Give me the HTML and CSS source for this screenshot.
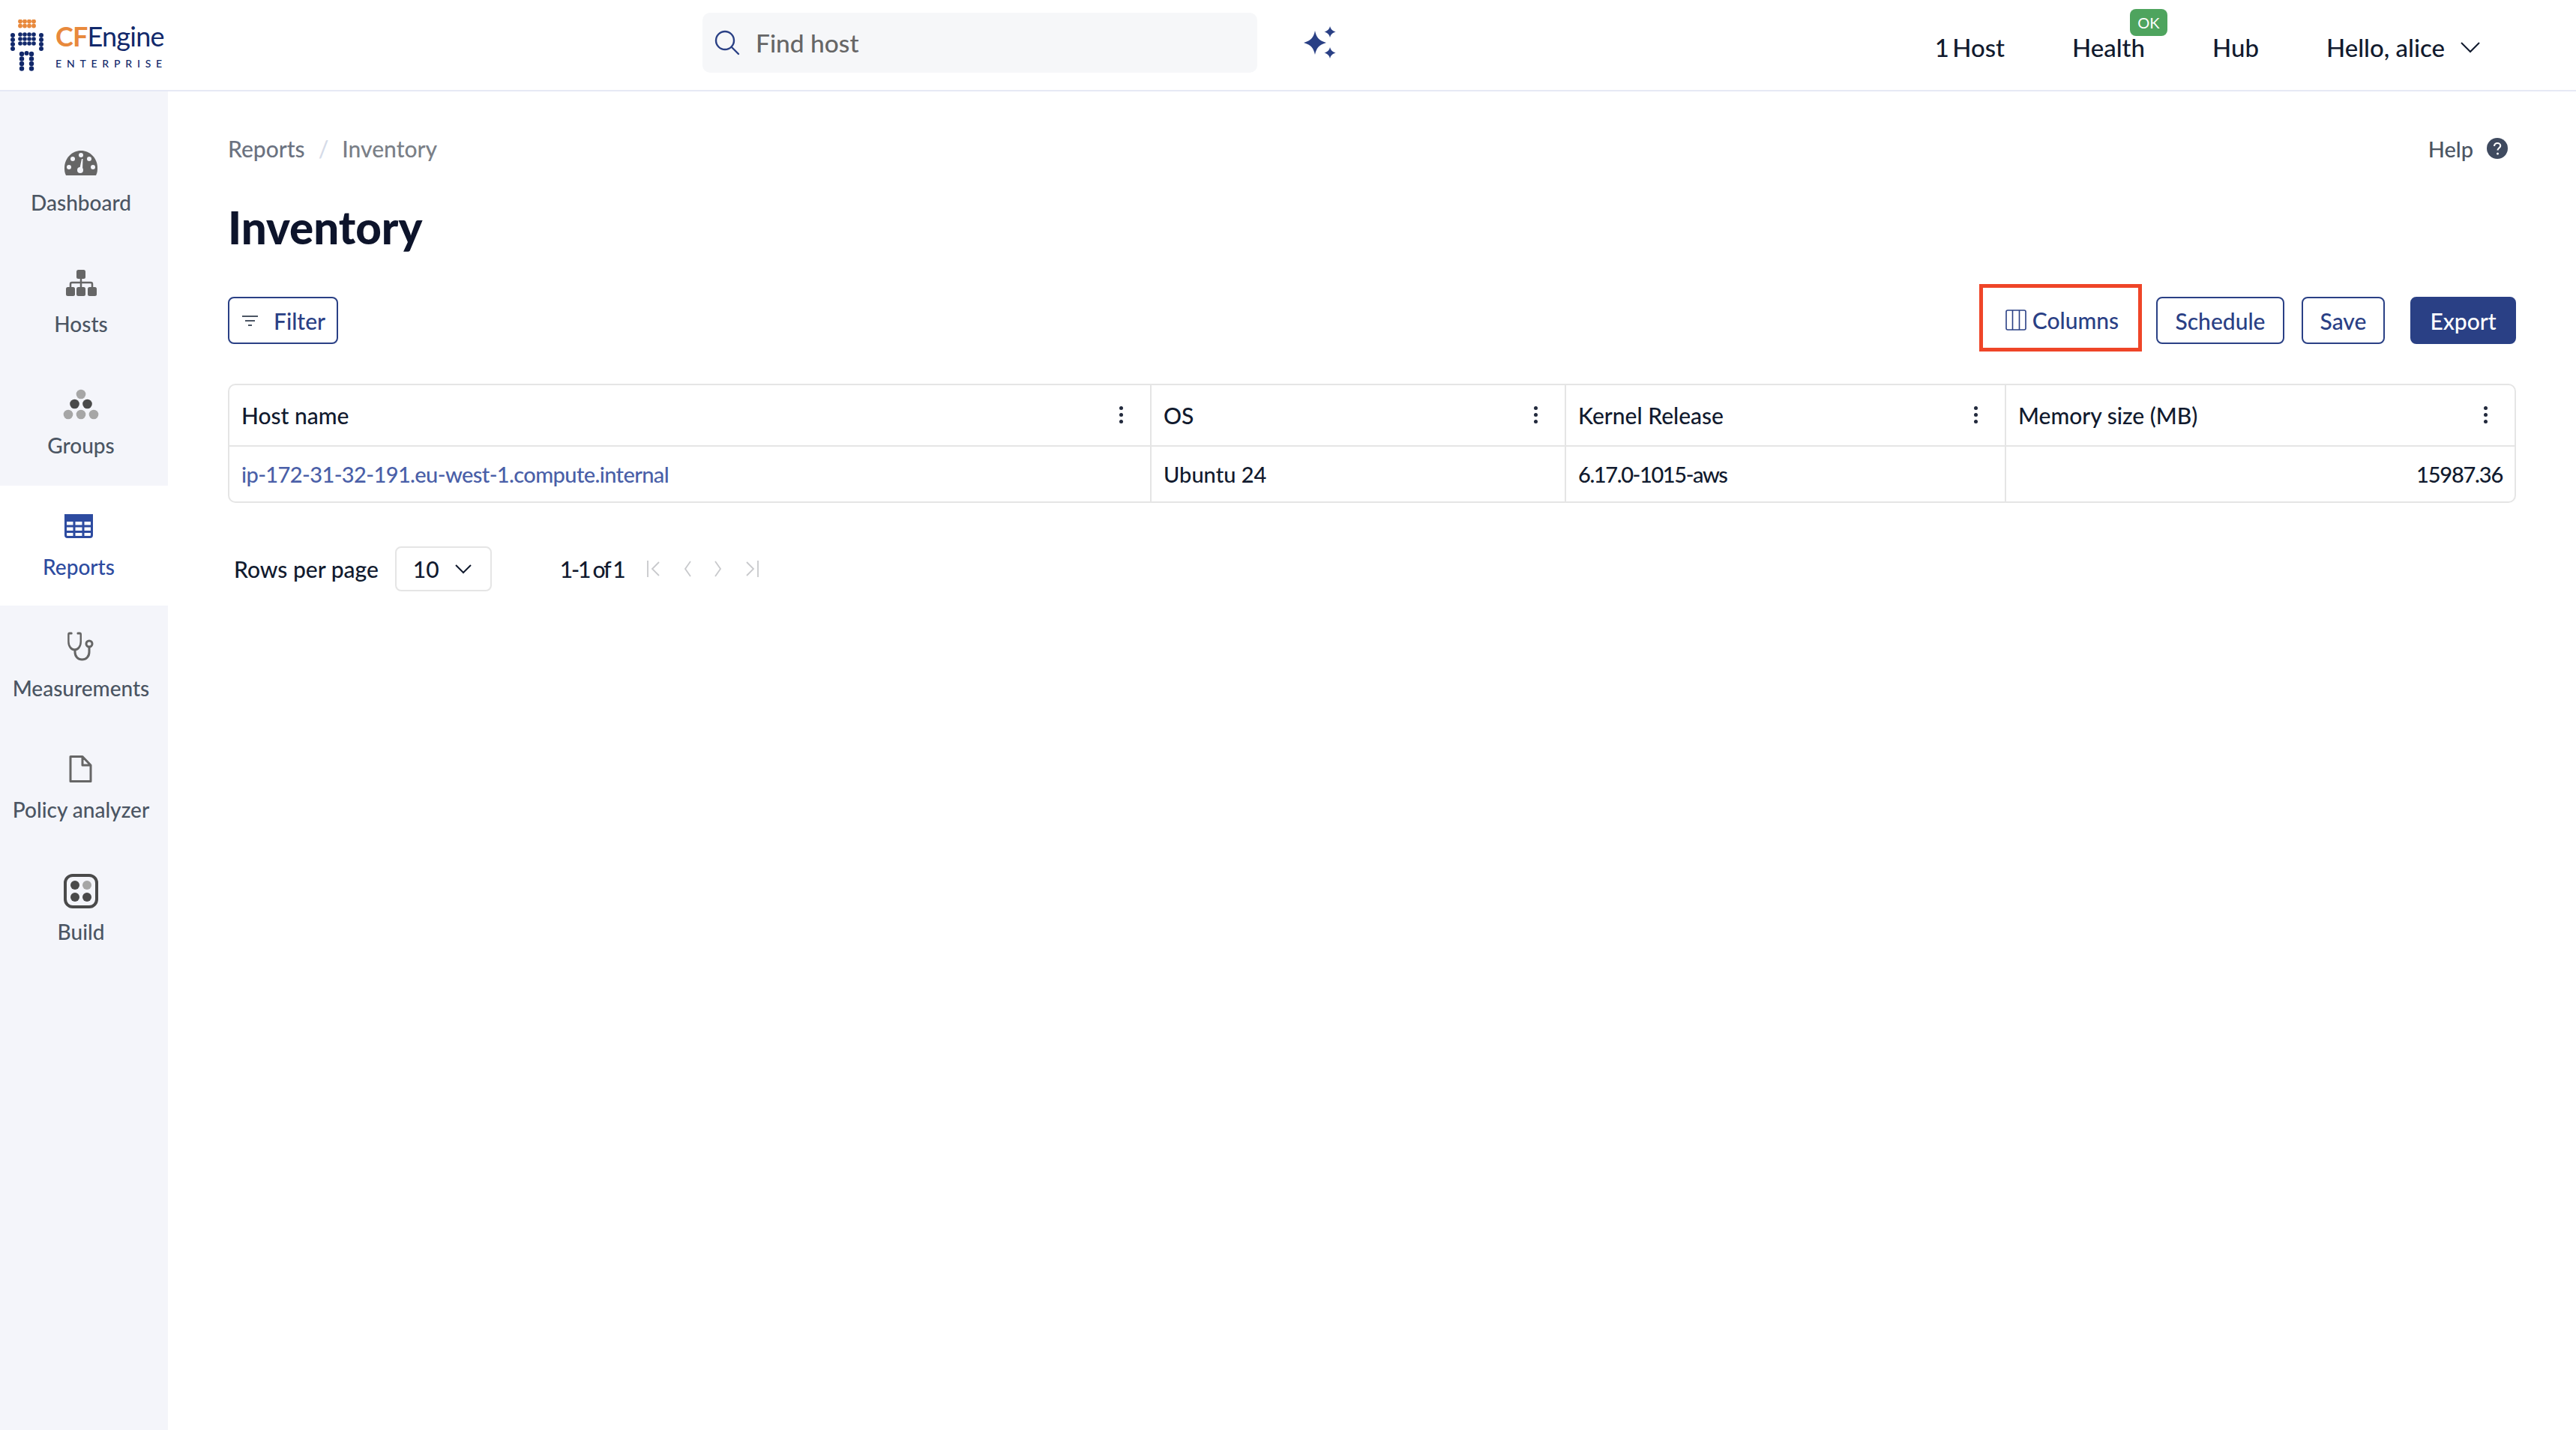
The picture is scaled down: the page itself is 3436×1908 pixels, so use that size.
FILE: index.html
```html
<!DOCTYPE html>
<html lang="en">
<head>
  <meta charset="UTF-8">
  <title>Inventory</title>
  <link rel="stylesheet" href="styles.css">
</head>
<body>
  <header class="topbar">
    <div class="logo">
      <svg class="logo-mark" width="44" height="72" viewBox="0 0 44 72">
        <g fill="#e8893c">
          <circle cx="13" cy="2.500" r="2.900"/><circle cx="19" cy="2.500" r="2.900"/><circle cx="25" cy="2.500" r="2.900"/><circle cx="31" cy="2.500" r="2.900"/>
          <circle cx="13" cy="8.500" r="2.900"/><circle cx="19" cy="8.500" r="2.900"/><circle cx="25" cy="8.500" r="2.900"/><circle cx="31" cy="8.500" r="2.900"/>
        </g>
        <g fill="#12296b">
          <circle cx="3" cy="21" r="3"/><circle cx="3" cy="27" r="3"/><circle cx="3" cy="33" r="3"/><circle cx="3" cy="39" r="3"/>
          <circle cx="41" cy="21" r="3"/><circle cx="41" cy="27" r="3"/><circle cx="41" cy="33" r="3"/><circle cx="41" cy="39" r="3"/>
          <circle cx="13" cy="20" r="2.800"/><circle cx="19" cy="20" r="2.800"/><circle cx="25" cy="20" r="2.800"/><circle cx="31" cy="20" r="2.800"/>
          <circle cx="13" cy="26" r="2.800"/><circle cx="19" cy="26" r="2.800"/><circle cx="25" cy="26" r="2.800"/><circle cx="31" cy="26" r="2.800"/>
          <circle cx="13" cy="32" r="2.800"/><circle cx="19" cy="32" r="2.800"/><circle cx="25" cy="32" r="2.800"/><circle cx="31" cy="32" r="2.800"/>
          <circle cx="15" cy="46" r="3.200"/><circle cx="15" cy="52.500" r="3.200"/><circle cx="15" cy="59" r="3.200"/><circle cx="15" cy="65.500" r="3.200"/>
          <circle cx="28" cy="46" r="3.200"/><circle cx="28" cy="52.500" r="3.200"/><circle cx="28" cy="59" r="3.200"/><circle cx="28" cy="65.500" r="3.200"/>
          <circle cx="21.500" cy="45" r="3"/>
        </g>
      </svg>
      <div class="logo-text">
        <div class="logo-name"><span class="logo-cf">CF</span>Engine</div>
        <div class="logo-sub">ENTERPRISE</div>
      </div>
    </div>

    <div class="search">
      <svg width="36" height="36" viewBox="0 0 36 36" fill="none" stroke="#2a4085" stroke-width="2.400" stroke-linecap="round">
        <circle cx="15" cy="15" r="12"/>
        <path d="M24 24l9 9"/>
      </svg>
      <span>Find host</span>
    </div>

    <svg class="sparkle" width="46" height="44" viewBox="0 0 46 44" fill="#2a4085">
      <path d="M15 6c2 9 5 13 15 16-10 3-13 7-15 16-2-9-5-13-15-16 10-3 13-7 15-16z"/>
      <path d="M35 0c1 4 3 6 7.500 7.500-4.500 1.500-6.500 3.500-7.500 7.500-1-4-3-6-7.500-7.500 4.500-1.500 6.500-3.500 7.500-7.500z"/>
      <path d="M35 28c1 4 3 6 7.500 7.500-4.500 1.500-6.500 3.500-7.500 7.500-1-4-3-6-7.500-7.500 4.500-1.500 6.500-3.500 7.500-7.500z"/>
    </svg>

    <nav class="topnav">
      <span class="hosts-count">1 Host</span>
      <span class="health">Health<span class="badge">OK</span></span>
      <span>Hub</span>
      <span class="user">Hello, alice
        <svg width="28" height="16" viewBox="0 0 28 16" fill="none" stroke="#111a2e" stroke-width="2"><path d="M2 2l12 12L26 2"/></svg>
      </span>
    </nav>
  </header>

  <div class="layout">
    <aside class="sidebar">
      <a class="side-item">
        <svg width="48" height="48" viewBox="0 0 48 48">
          <path d="M4 42c-2-4-2-7-2-10C2 19 12 9 24 9s22 10 22 23c0 3 0 6-2 10z" fill="#666"/>
          <g fill="#f4f5fa">
            <circle cx="24" cy="15" r="3"/><circle cx="13" cy="20" r="3"/><circle cx="35" cy="20" r="3"/>
            <circle cx="8" cy="31" r="3"/><circle cx="40" cy="31" r="3"/><circle cx="23" cy="35" r="4"/>
            <path d="M22 34l3-14h1.500l-.5 15z"/>
          </g>
        </svg>
        <span>Dashboard</span>
      </a>
      <a class="side-item">
        <svg width="48" height="48" viewBox="0 0 48 48">
          <g fill="#666">
            <rect x="18" y="6" width="12" height="12" rx="2.500"/>
            <rect x="4" y="29" width="12" height="12" rx="2.500"/>
            <rect x="18" y="29" width="12" height="12" rx="2.500"/>
            <rect x="33" y="29" width="12" height="12" rx="2.500"/>
          </g>
          <path d="M24 18v11M10 29v-4a2 2 0 0 1 2-2h25a2 2 0 0 1 2 2v4" fill="none" stroke="#666" stroke-width="2.500"/>
        </svg>
        <span>Hosts</span>
      </a>
      <a class="side-item">
        <svg width="48" height="48" viewBox="0 0 48 48">
          <g fill="#a6a6a6"><circle cx="24" cy="10" r="6.300"/><circle cx="7" cy="37" r="6.300"/><circle cx="24" cy="37" r="6.300"/><circle cx="41" cy="37" r="6.300"/></g>
          <g fill="#4a4a4a"><circle cx="15.500" cy="23" r="6.300"/><circle cx="32.500" cy="23" r="6.300"/></g>
        </svg>
        <span>Groups</span>
      </a>
      <a class="side-item active">
        <svg width="48" height="48" viewBox="0 0 48 48" fill="none" stroke="#2d4ba0" stroke-width="3">
          <rect x="6.500" y="9.500" width="35" height="29" rx="2.500"/>
          <path d="M6.500 16.500h35M6.500 24h35M6.500 31.500h35M18 16.500v22M30 16.500v22"/>
          <rect x="6.500" y="9.500" width="35" height="7" fill="#2d4ba0"/>
        </svg>
        <span>Reports</span>
      </a>
      <a class="side-item">
        <svg width="48" height="48" viewBox="0 0 48 48" fill="none" stroke="#666" stroke-width="3" stroke-linecap="round">
          <path d="M14 5h-3.500C9.500 5 9 5.500 9 6.500V16c0 7 5 11 10 11s10-4 10-11V6.500C29 5.500 28.500 5 27.500 5H24" transform="scale(.82 1)"/>
          <path d="M16 27v3c0 6 4 10 9.500 10S35 36 35 30v-6"/>
          <circle cx="35" cy="19" r="4"/>
        </svg>
        <span>Measurements</span>
      </a>
      <a class="side-item">
        <svg width="48" height="48" viewBox="0 0 48 48" fill="none" stroke="#666" stroke-width="3" stroke-linejoin="round">
          <path d="M10 7.500h16L37 19v21.500H10zM26 7.500V19h11"/>
        </svg>
        <span>Policy analyzer</span>
      </a>
      <a class="side-item">
        <svg width="48" height="48" viewBox="0 0 48 48">
          <rect x="3" y="3" width="42" height="42" rx="10" fill="none" stroke="#4a4a4a" stroke-width="4"/>
          <circle cx="16" cy="16" r="6" fill="#4a4a4a"/><circle cx="32" cy="16" r="6" fill="#a6a6a6"/>
          <circle cx="16" cy="32" r="6" fill="#4a4a4a"/><circle cx="32" cy="32" r="6" fill="#4a4a4a"/>
        </svg>
        <span>Build</span>
      </a>
    </aside>

    <main class="content">
      <div class="crumb-row">
        <div class="crumbs">
          <span>Reports</span><span class="slash">/</span><span class="current">Inventory</span>
        </div>
        <div class="help">Help
          <svg width="28" height="28" viewBox="0 0 28 28">
            <circle cx="14" cy="14" r="14" fill="#3f4a5f"/>
            <path d="M10 11c0-2.500 2-4 4.200-4 2.300 0 4 1.500 4 3.500 0 3-3.700 3-3.700 6" fill="none" stroke="#fff" stroke-width="2.200"/>
            <circle cx="14.500" cy="21" r="1.500" fill="#fff"/>
          </svg>
        </div>
      </div>

      <h1>Inventory</h1>

      <div class="toolbar">
        <button class="btn filter">
          <svg width="22" height="16" viewBox="0 0 22 16" fill="none" stroke="#4b5563" stroke-width="2"><path d="M0 2h21M4 8h13M8 14h5"/></svg>
          Filter
        </button>
        <div class="actions">
          <button class="btn columns">
            <svg width="28" height="28" viewBox="0 0 28 28" fill="none" stroke="#2a4085" stroke-width="1.600"><rect x="1" y="1" width="26" height="26" rx="2"/><path d="M9.500 1v26M18.500 1v26"/></svg>
            Columns
          </button>
          <button class="btn schedule">Schedule</button>
          <button class="btn save">Save</button>
          <button class="btn export">Export</button>
        </div>
      </div>

      <div class="table-wrap">
        <table>
          <colgroup>
            <col class="col-host"><col class="col-os"><col class="col-kernel"><col>
          </colgroup>
          <thead>
            <tr>
              <th><div class="th-inner">Host name<span class="kebab"><i></i><i></i><i></i></span></div></th>
              <th><div class="th-inner">OS<span class="kebab"><i></i><i></i><i></i></span></div></th>
              <th><div class="th-inner">Kernel Release<span class="kebab"><i></i><i></i><i></i></span></div></th>
              <th><div class="th-inner">Memory size (MB)<span class="kebab"><i></i><i></i><i></i></span></div></th>
            </tr>
          </thead>
          <tbody>
            <tr>
              <td><a class="host-link">ip-172-31-32-191.eu-west-1.compute.internal</a></td>
              <td>Ubuntu 24</td>
              <td class="kernel">6.17.0-1015-aws</td>
              <td class="num">15987.36</td>
            </tr>
          </tbody>
        </table>
      </div>

      <div class="pager">
        <span class="pager-label">Rows per page</span>
        <div class="select">10
          <svg width="24" height="14" viewBox="0 0 24 14" fill="none" stroke="#111a2e" stroke-width="2"><path d="M2 2l10 10L22 2"/></svg>
        </div>
        <span class="pager-count">1-1 of 1</span>
        <div class="pager-nav">
          <svg width="18" height="24" viewBox="0 0 18 24"><path d="M1 1v22M16 3L7 12l9 9"/></svg>
          <svg width="10" height="24" viewBox="0 0 10 24"><path d="M9 2L2 12l7 10"/></svg>
          <svg width="10" height="24" viewBox="0 0 10 24"><path d="M1 2l7 10-7 10"/></svg>
          <svg width="18" height="24" viewBox="0 0 18 24"><path d="M17 1v22M2 3l9 9-9 9"/></svg>
        </div>
      </div>
    </main>
  </div>
</body>
</html>
```

FILE: styles.css
```css
* {
  margin: 0;
  padding: 0;
  box-sizing: border-box;
}

body {
  font-family: "Lato", "Liberation Sans", sans-serif;
  font-weight: 500;
  color: #111a2e;
  background: #fff;
  height: 1908px;
  overflow: hidden;
  display: flex;
  flex-direction: column;
}

/* top bar */
.topbar {
  height: 122px;
  flex-shrink: 0;
  display: flex;
  align-items: center;
  border-bottom: 2px solid #e6e9f5;
}

.logo {
  width: 937px;
  padding-left: 14px;
  display: flex;
  align-items: center;
  gap: 16px;
}

.logo-mark {
  margin-top: 4px;
}

.logo-text {
  margin-top: 2px;
}

.logo-name {
  font-size: 36px;
  line-height: 40px;
  font-weight: 400;
  color: #12296b;
  letter-spacing: -0.800px;
}

.logo-cf {
  color: #e8893c;
  font-weight: 700;
}

.logo-sub {
  font-size: 14px;
  line-height: 18px;
  color: #12296b;
  letter-spacing: 6.800px;
  margin-top: 8px;
}

.search {
  width: 740px;
  height: 80px;
  margin-bottom: 6px;
  background: #f6f7f9;
  border-radius: 10px;
  padding-left: 15px;
  display: flex;
  align-items: center;
  gap: 20px;
  font-size: 33.500px;
  color: #666;
}

.sparkle {
  margin-left: 62px;
  margin-bottom: 6px;
}

.topnav {
  margin-left: auto;
  padding-right: 127px;
  padding-top: 6px;
  display: flex;
  align-items: center;
  gap: 90px;
  font-size: 33px;
}

.hosts-count {
  word-spacing: -4px;
}

.health {
  position: relative;
}

.badge {
  position: absolute;
  left: 77px;
  top: -31px;
  width: 50px;
  height: 36px;
  background: #4ea45e;
  color: #fff;
  border-radius: 8px;
  font-size: 20px;
  line-height: 36px;
  text-align: center;
  font-weight: 400;
}

.user {
  display: flex;
  align-items: center;
  gap: 20px;
}

/* sidebar */
.layout {
  flex: 1;
  display: flex;
  min-height: 0;
}

.sidebar {
  width: 224px;
  flex-shrink: 0;
  background: #f4f5fa;
  padding-top: 40px;
  display: flex;
  flex-direction: column;
  gap: 2px;
}

.side-item {
  height: 160px;
  padding: 30px 8px 0 0;
  display: flex;
  flex-direction: column;
  align-items: center;
  gap: 12px;
  font-size: 28px;
  line-height: 36px;
  color: #4b5563;
  white-space: nowrap;
}

.side-item:last-child {
  padding-top: 31px;
}

.side-item.active {
  background: #fff;
  color: #2d4ba0;
  padding-right: 14px;
}

/* main */
.content {
  flex: 1;
  min-width: 0;
  padding: 58px 80px 0 80px;
}

.crumb-row {
  display: flex;
  justify-content: space-between;
  align-items: center;
  height: 36px;
  font-size: 30px;
  color: #6b7280;
}

.crumbs {
  display: flex;
  gap: 18px;
}

.slash {
  color: #d5dbe8;
}

.current {
  color: #7a7f87;
}

.help {
  display: flex;
  align-items: center;
  gap: 18px;
  font-size: 29px;
  color: #4b5563;
  padding-right: 11px;
}

h1 {
  margin-top: 53px;
  font-size: 60px;
  line-height: 68px;
  font-weight: 900;
  color: #0d142b;
}

.toolbar {
  margin-top: 42px;
  height: 90px;
  display: flex;
  justify-content: space-between;
  align-items: flex-start;
}

.actions {
  display: flex;
  align-items: flex-start;
}

.btn {
  height: 63px;
  margin-top: 17px;
  font-family: inherit;
  font-size: 30px;
  font-weight: 500;
  color: #2a4085;
  background: #fff;
  border: 2px solid #2a4085;
  border-radius: 8px;
  display: flex;
  align-items: center;
  justify-content: center;
}

.filter {
  width: 147px;
  padding-left: 2px;
  gap: 20px;
}

.columns {
  width: 217px;
  height: 90px;
  margin-top: 0;
  padding: 6px 0 0 4px;
  border: 5px solid #ef4528;
  border-radius: 0;
  gap: 8px;
  margin-right: 19px;
}

.schedule {
  width: 171px;
  margin-right: 23px;
}

.save {
  width: 111px;
  margin-right: 34px;
}

.export {
  width: 141px;
  background: #2a4085;
  color: #fff;
}

/* table */
.table-wrap {
  margin-top: 43px;
  border: 2px solid #e5e5e5;
  border-radius: 10px;
  overflow: hidden;
}

table {
  width: 100%;
  border-collapse: collapse;
  table-layout: fixed;
  font-size: 29px;
}

.col-host {
  width: 1229px;
}

.col-os {
  width: 553px;
}

.col-kernel {
  width: 587px;
}

th {
  height: 81px;
  font-size: 30px;
  font-weight: 500;
  text-align: left;
  border-bottom: 2px solid #e5e5e5;
  border-right: 2px solid #e5e5e5;
}

td {
  height: 74px;
  padding: 0 16px;
  border-right: 2px solid #e5e5e5;
}

th:last-child,
td:last-child {
  border-right: none;
}

.th-inner {
  display: flex;
  justify-content: space-between;
  align-items: center;
  padding: 0 36px 0 16px;
}

.kebab {
  display: flex;
  flex-direction: column;
  gap: 4px;
  margin-top: -2px;
}

.kebab i {
  width: 5px;
  height: 5px;
  border-radius: 50%;
  background: #222a3d;
}

.host-link {
  color: #4a5fa8;
  letter-spacing: -0.600px;
}

.kernel {
  letter-spacing: -1.400px;
}

.num {
  text-align: right;
  letter-spacing: -1.200px;
}

/* pagination */
.pager {
  margin-top: 58px;
  padding-left: 8px;
  display: flex;
  align-items: center;
  font-size: 30px;
}

.select {
  margin-left: 22px;
  width: 129px;
  height: 60px;
  border: 2px solid #e5e5e5;
  border-radius: 8px;
  padding-left: 22px;
  display: flex;
  align-items: center;
  gap: 20px;
}

.pager-count {
  margin-left: 91px;
  letter-spacing: -2.200px;
  word-spacing: -1px;
}

.pager-nav {
  margin-left: 31px;
  display: flex;
  align-items: center;
  gap: 31px;
}

.pager-nav svg {
  fill: none;
  stroke: #c8c9cc;
  stroke-width: 1.800;
}
```
